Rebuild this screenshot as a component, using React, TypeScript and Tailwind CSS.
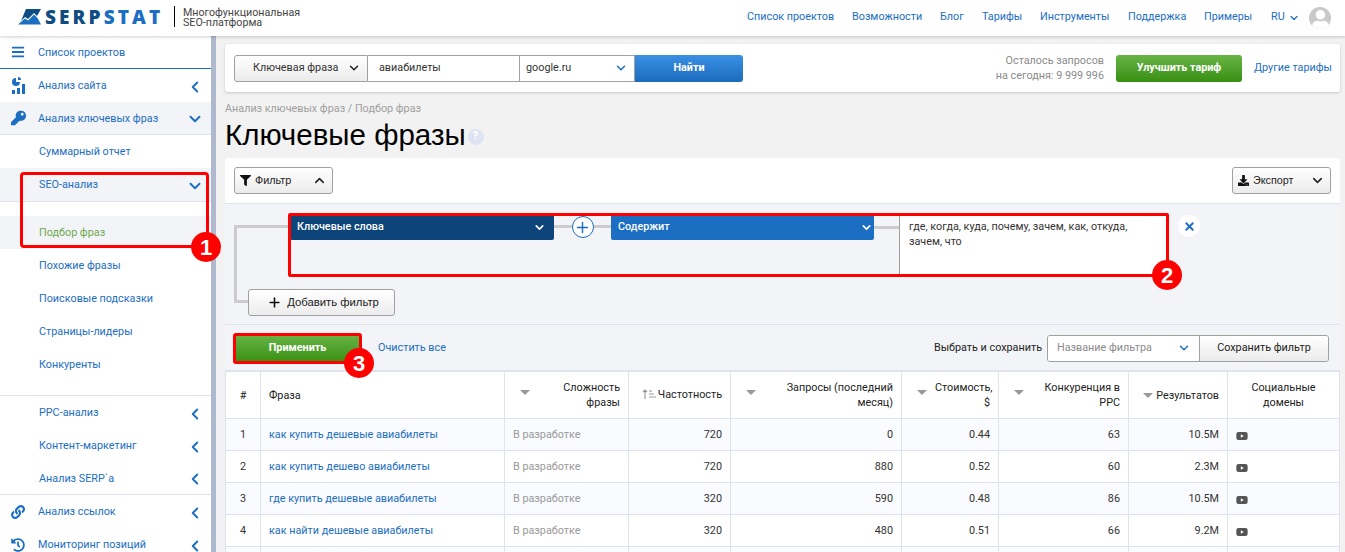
import React from "react";
import { ChevronDown, ChevronLeft, ChevronUp, Plus, X } from "lucide-react";
import { FaBars, FaDownload, FaFilter, FaHistory, FaKey, FaLink, FaUser, FaYoutube } from "react-icons/fa";

const nav: [string, string][] = [
  ["Список проектов", "w-[105px]"],
  ["Возможности", "w-[88px]"],
  ["Блог", "w-[42px]"],
  ["Тарифы", "w-[58px]"],
  ["Инструменты", "w-[88px]"],
  ["Поддержка", "w-[76px]"],
  ["Примеры", "w-[67px]"],
];

function ChartIcon() {
  return (
    <svg width="16" height="18" viewBox="0 0 16 18" fill="#1b6ec2">
      <path d="M5 1a4 4 0 1 0 4 4H5z" />
      <path d="M7 0a3 3 0 0 1 3 3H7z" />
      <rect x="1" y="13" width="3" height="4" />
      <rect x="6" y="11" width="3" height="6" />
      <rect x="11" y="7" width="3" height="10" />
    </svg>
  );
}

function Row({ label, icon, open, h = "h-[33px]", cls = "" }: { label: string; icon?: React.ReactNode; open?: boolean; h?: string; cls?: string }) {
  return (
    <div className={`flex items-center shrink-0 ${h} ${icon ? "pl-[38px]" : "pl-[39px]"} pr-[7px] pt-[2px] relative text-[#1b6ec2] ${cls}`}>
      {icon && <span className="absolute left-[11px] top-1/2 -translate-y-1/2 flex">{icon}</span>}
      <span className="flex-1">{label}</span>
      {open === undefined ? null : open ? (
        <ChevronDown size={18} strokeWidth={2.5} />
      ) : (
        <ChevronLeft size={18} strokeWidth={2.5} />
      )}
    </div>
  );
}

function Sidebar() {
  return (
    <aside className="w-[216px] shrink-0 bg-white border-r-[5px] border-[#aeb8cf] flex flex-col text-[10.8px]">
      <Row label="Список проектов" icon={<FaBars size={14} color="#1b6ec2" />} cls="border-b border-[#1b6ec2]" />
      <Row label="Анализ сайта" icon={<ChartIcon />} open={false} />
      <Row label="Анализ ключевых фраз" icon={<FaKey size={15} color="#1b6ec2" />} open cls="bg-[#f3f4f8] border-b border-[#dfe3ee]" />
      <Row label="Суммарный отчет" />
      <Row label="SEO-анализ" open h="h-[34px]" cls="bg-[#f3f4f8] border-b border-[#dfe3ee]" />
      <div className="h-[14px] shrink-0" />
      <Row label="Подбор фраз" cls="bg-[#f3f4f8] !text-[#6fa84f]" />
      <Row label="Похожие фразы" />
      <Row label="Поисковые подсказки" />
      <Row label="Страницы-лидеры" />
      <Row label="Конкуренты" />
      <div className="h-[15px] shrink-0 border-b border-[#dfe3ee]" />
      <Row label="PPC-анализ" open={false} />
      <Row label="Контент-маркетинг" open={false} />
      <Row label="Анализ SERP`a" open={false} cls="border-b border-[#dfe3ee]" />
      <Row label="Анализ ссылок" icon={<FaLink size={14} color="#1b6ec2" />} open={false} />
      <Row label="Мониторинг позиций" icon={<FaHistory size={14} color="#1b6ec2" />} open={false} />
    </aside>
  );
}

function Header() {
  return (
    <header className="h-[36px] shrink-0 bg-white shadow-[0_1px_3px_rgba(0,0,0,0.2)] flex items-center relative z-10 pl-[18px] pr-[14px]">
      <svg width="23" height="16" viewBox="0 0 23 16" className="shrink-0 mb-[3px]">
        <path d="M8 0H23L19 7 16 4 10 10 7 8 3 12Z" fill="#0f4c81" />
        <path d="M0 15.5L7 9.5 10 11.5 16 5.5 19.5 9 23 15.5Z" fill="#1b6ec2" />
      </svg>
      <span className="ml-[4px] w-[129px] font-['Open_Sans'] font-extrabold text-[19px] tracking-[3.1px] leading-none mb-[2px] whitespace-nowrap">
        <span className="text-[#0f4c81]">SERP</span>
        <span className="text-[#1b6ec2]">STAT</span>
      </span>
      <div className="w-px h-[21px] bg-black mb-[3px]" />
      <div className="ml-[8px] text-[10.7px] leading-[10px] text-[#444] mb-[1px]">
        Многофункциональная
        <br />
        SEO-платформа
      </div>
      <div className="ml-auto flex items-center text-[10.8px] text-[#1b6ec2] mb-[1px]">
        {nav.map(([n, w]) => (
          <span key={n} className={`${w} whitespace-nowrap`}>
            {n}
          </span>
        ))}
        <span className="w-[17px]">RU</span>
        <ChevronDown size={12} strokeWidth={2.5} />
        <span className="w-[22px] h-[22px] ml-[9px] rounded-full bg-[#c9c9c9] flex items-end justify-center overflow-hidden">
          <FaUser size={19} color="#fff" />
        </span>
      </div>
    </header>
  );
}

function SearchCard() {
  return (
    <div className="h-[48px] bg-white rounded-[3px] shadow-[0_1px_3px_rgba(0,0,0,0.18)] flex items-center pl-[9px] pr-[9px] text-[10.8px]">
      <div className="flex h-[27px] w-[509px]">
        <div className="w-[134px] border border-[#a0a0a0] rounded-l-[3px] bg-linear-to-b from-white to-[#ececec] flex items-center pl-[18px] pr-[6px] text-[#333]">
          <span className="flex-1">Ключевая фраза</span>
          <ChevronDown size={14} strokeWidth={2.5} color="#222" />
        </div>
        <div className="w-[151px] border-y border-[#a0a0a0] flex items-center pl-[11px] text-[#333]">авиабилеты</div>
        <div className="w-[116px] border border-[#a0a0a0] flex items-center pl-[6px] pr-[6px] text-[#333]">
          <span className="flex-1">google.ru</span>
          <ChevronDown size={14} strokeWidth={2.5} color="#1b6ec2" />
        </div>
        <div className="w-[108px] rounded-r-[3px] bg-linear-to-b from-[#3a90e4] to-[#1b6bbd] text-white font-bold flex items-center justify-center">Найти</div>
      </div>
      <div className="ml-auto text-right text-[#8b8b8b] leading-[15px] mr-[12px]">
        Осталось запросов
        <br />
        на сегодня: 9 999 996
      </div>
      <div className="w-[126px] h-[27px] rounded-[3px] bg-linear-to-b from-[#68b545] to-[#378f0c] text-white font-bold flex items-center justify-center">Улучшить тариф</div>
      <div className="ml-[12px] w-[77px] text-[#1b6ec2] whitespace-nowrap">Другие тарифы</div>
    </div>
  );
}

function Btn({ children, cls = "" }: { children: React.ReactNode; cls?: string }) {
  return (
    <div className={`h-[27px] border border-[#a0a0a0] rounded-[3px] bg-linear-to-b from-white to-[#ececec] flex items-center text-[#222] ${cls}`}>{children}</div>
  );
}

function Filters() {
  return (
    <div className="relative h-[122px] bg-[#f3f4f8] border-y border-[#dfe3ee] pl-[65px] pt-[10px]">
      <div className="absolute left-[9px] top-[21px] w-[56px] h-[78px] border-l-[3px] border-y-[3px] border-[#cccccc]" />
      <div className="flex items-start relative">
        <div className="w-[264px] h-[26px] bg-[#0d447a] text-white font-medium flex items-center pl-[7px] pr-[8px] rounded-b-[2px]">
          <span className="flex-1">Ключевые слова</span>
          <ChevronDown size={13} strokeWidth={3} />
        </div>
        <div className="w-[57px] h-[26px] flex items-center justify-center relative">
          <div className="absolute inset-x-0 top-[11px] h-[3px] bg-[#cccccc]" />
          <div className="relative w-[22px] h-[22px] rounded-full bg-white border border-[#1b6ec2] flex items-center justify-center">
            <Plus size={17} color="#1b6ec2" strokeWidth={2} />
          </div>
        </div>
        <div className="w-[263px] h-[26px] bg-[#1b6ec2] text-white font-medium flex items-center pl-[7px] pr-[1px] rounded-b-[2px]">
          <span className="flex-1">Содержит</span>
          <ChevronDown size={13} strokeWidth={3} />
        </div>
        <div className="w-[25px] h-[26px] flex items-center">
          <div className="w-full h-[3px] bg-[#cccccc]" />
        </div>
        <div className="w-[267px] h-[63px] bg-white border-l border-[#a0a0a0] pl-[9px] pr-[30px] pt-[5px] leading-[15px] text-[#333]">
          где, когда, куда, почему, зачем, как, откуда, зачем, что
        </div>
        <div className="ml-[12px] mt-[1px] w-[22px] h-[22px] rounded-full bg-white flex items-center justify-center">
          <X size={13} strokeWidth={3.5} color="#1b6ec2" />
        </div>
      </div>
      <div className="absolute left-[23px] top-[85px]">
        <Btn cls="w-[147px] justify-center gap-[5px] pl-[3px]">
          <Plus size={15} strokeWidth={2.5} color="#111" />
          <span className="text-[11.3px] font-['Liberation_Sans']">Добавить фильтр</span>
        </Btn>
      </div>
    </div>
  );
}

function SortTri() {
  return <span className="inline-block w-0 h-0 border-x-[5px] border-x-transparent border-t-[5px] border-t-[#999]" />;
}

const rows = [
  ["как купить дешевые авиабилеты", "720", "0", "0.44", "63", "10.5M"],
  ["как купить дешево авиабилеты", "720", "880", "0.52", "60", "2.3M"],
  ["где купить дешевые авиабилеты", "320", "590", "0.48", "86", "10.5M"],
  ["как найти дешевые авиабилеты", "320", "480", "0.51", "66", "9.2M"],
];

function Th({ children, cls = "", tri }: { children: React.ReactNode; cls?: string; tri?: boolean }) {
  return (
    <th className={`border border-[#dfe3ee] font-normal leading-[15px] px-[8px] text-[#222] relative ${cls}`}>
      {tri && (
        <span className="absolute left-[15px] top-[18px] flex">
          <SortTri />
        </span>
      )}
      {children}
    </th>
  );
}

function Table() {
  return (
    <table className="w-full table-fixed border-collapse text-[10.8px]">
      <colgroup>
        <col className="w-[35px]" />
        <col className="w-[244px]" />
        <col className="w-[124px]" />
        <col className="w-[102px]" />
        <col className="w-[171px]" />
        <col className="w-[97px]" />
        <col className="w-[130px]" />
        <col className="w-[99px]" />
        <col />
      </colgroup>
      <thead>
        <tr className="h-[47px] bg-white">
          <Th cls="text-center font-medium">#</Th>
          <Th cls="text-left">Фраза</Th>
          <Th cls="text-right" tri>
            <span className="block pl-[40px]">Сложность фразы</span>
          </Th>
          <Th cls="text-right whitespace-nowrap">
            <span className="inline-flex items-center gap-[2px]">
              <svg width="14" height="10" viewBox="0 0 14 10" fill="none" stroke="#999" strokeWidth="1.2">
                <path d="M3 10V1M1 3l2-2 2 2M7 2h3M7 5h5M7 8h7" />
              </svg>
              Частотность
            </span>
          </Th>
          <Th cls="text-right" tri>
            <span className="block pl-[40px]">Запросы (последний месяц)</span>
          </Th>
          <Th cls="text-right" tri>
            <span className="block pl-[25px]">Стоимость, $</span>
          </Th>
          <Th cls="text-right" tri>
            <span className="block pl-[30px]">Конкуренция в PPC</span>
          </Th>
          <Th cls="text-right whitespace-nowrap">
            <span className="inline-flex items-center gap-[3px]">
              <SortTri />
              Результатов
            </span>
          </Th>
          <Th cls="text-center">Социальные домены</Th>
        </tr>
      </thead>
      <tbody>
        {rows.map((r, i) => (
          <tr key={i} className={`h-[32px] ${i % 2 === 0 ? "bg-[#fafbfe]" : "bg-white"}`}>
            <td className="border border-[#dfe3ee] text-center text-[#333] pt-[2px]">{i + 1}</td>
            <td className="border border-[#dfe3ee] px-[8px] pt-[2px] text-[#1b6ec2]">{r[0]}</td>
            <td className="border border-[#dfe3ee] px-[8px] pt-[2px] text-[#999]">В разработке</td>
            {r.slice(1).map((v, j) => (
              <td key={j} className="border border-[#dfe3ee] px-[8px] pt-[2px] text-right text-[#333]">
                {v}
              </td>
            ))}
            <td className="border border-[#dfe3ee] px-[8px] pt-[2px]">
              <FaYoutube size={12} color="#555" />
            </td>
          </tr>
        ))}
        <tr className="h-[32px] bg-[#fafbfe]">
          {Array.from({ length: 9 }).map((_, i) => (
            <td key={i} className="border border-[#dfe3ee]" />
          ))}
        </tr>
      </tbody>
    </table>
  );
}

function Main() {
  return (
    <main className="flex-1 min-w-0 bg-[#f2f2f2] pl-[9px] pr-[5px] pt-[8px] overflow-hidden">
      <SearchCard />
      <div className="mt-[10px] text-[10.8px] leading-[13px] text-[#a0a0a0]">Анализ ключевых фраз / Подбор фраз</div>
      <div className="mt-[2px] flex items-center h-[35px] mb-[6px]">
        <h1 className="font-['Liberation_Sans'] text-[29.5px] leading-none text-black">Ключевые фразы</h1>
        <span className="ml-[2px] mt-[4px] w-[16px] h-[16px] rounded-full bg-[#dfe4f3] text-white text-[11px] font-bold flex items-center justify-center">?</span>
      </div>
      <section className="bg-white rounded-t-[3px] text-[10.8px]">
        <div className="h-[45px] flex items-center justify-between px-[9px]">
          <Btn cls="w-[99px] pl-[5px] pr-[5px] font-['Liberation_Sans']">
            <FaFilter size={11} color="#111" />
            <span className="ml-[4px] flex-1">Фильтр</span>
            <ChevronUp size={15} strokeWidth={2.5} color="#222" />
          </Btn>
          <Btn cls="w-[99px] pl-[5px] pr-[5px] font-['Liberation_Sans']">
            <FaDownload size={11} color="#111" />
            <span className="ml-[4px] flex-1">Экспорт</span>
            <ChevronDown size={15} strokeWidth={2.5} color="#222" />
          </Btn>
        </div>
        <Filters />
        <div className="h-[46px] bg-[#f3f4f8] border-b border-[#dfe3ee] flex items-center pl-[9px] pr-[11px] pt-[1px]">
          <div className="w-[127px] h-[27px] rounded-[2px] bg-linear-to-b from-[#68b545] to-[#378f0c] text-white font-bold flex items-center justify-center">Применить</div>
          <span className="ml-[17px] text-[#1b6ec2]">Очистить все</span>
          <span className="ml-auto text-[#222]">Выбрать и сохранить</span>
          <div className="ml-[5px] flex h-[27px] border border-[#a0a0a0] rounded-[3px] overflow-hidden">
            <div className="w-[151px] bg-white flex items-center pl-[9px] pr-[8px] text-[#8b8b8b]">
              <span className="flex-1">Название фильтра</span>
              <ChevronDown size={14} strokeWidth={2.5} color="#1b6ec2" />
            </div>
            <div className="w-[129px] border-l border-[#a0a0a0] bg-linear-to-b from-white to-[#ececec] flex items-center justify-center text-[#222]">Сохранить фильтр</div>
          </div>
        </div>
        <Table />
      </section>
    </main>
  );
}

function Badge({ n, cls }: { n: string; cls: string }) {
  return (
    <span className={`absolute w-[30px] h-[30px] rounded-full bg-[#ff0000] text-white font-['Liberation_Sans'] font-bold text-[22px] flex items-center justify-center ${cls}`}>{n}</span>
  );
}

export default function App() {
  return (
    <div className="relative w-[1345px] h-[552px] overflow-hidden flex flex-col font-['Roboto',sans-serif] bg-[#f2f2f2]">
      <Header />
      <div className="flex flex-1 min-h-0">
        <Sidebar />
        <Main />
      </div>
      <div className="absolute left-[20px] top-[172px] w-[189px] h-[76px] border-[3px] border-[#ff0000] rounded-[4px] z-20" />
      <div className="absolute left-[288px] top-[213px] w-[881px] h-[64px] border-[3px] border-[#ff0000] rounded-[2px] z-20" />
      <div className="absolute left-[233px] top-[333px] w-[129px] h-[31px] border-[3px] border-[#ff0000] rounded-[3px] z-20" />
      <Badge n="1" cls="left-[191px] top-[232px] z-30" />
      <Badge n="2" cls="left-[1152px] top-[260px] z-30" />
      <Badge n="3" cls="left-[344px] top-[348px] z-30" />
    </div>
  );
}
